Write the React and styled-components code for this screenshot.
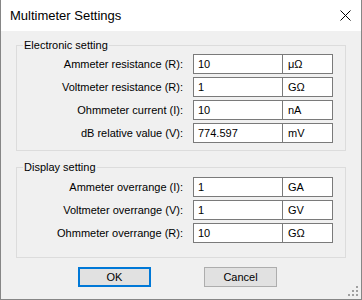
import React from "react";
import styled, { createGlobalStyle } from "styled-components";

const Global = createGlobalStyle`
  body{
    margin:0;
    background:#f0f0f0;
    font-family:"Liberation Sans", Arial, sans-serif;
  }
`

const Window = styled.div`
  position:relative;
  width:362px;
  height:300px;
  box-sizing:border-box;
  border:1px solid #868686;
  border-top:none;
  background:#f0f0f0;
  display:flex;
  flex-direction:column;
`

const TitleBar = styled.div`
  height:31px;
  background:#fff;
  display:flex;
  align-items:center;
  justify-content:space-between;
  padding:0 10px 0 9px;
  font-size:13px;
  color:#000;
`

const Body = styled.div`
  padding:8px 15px 0 15px;
  display:flex;
  flex-direction:column;
`

const Group = styled.fieldset`
  margin:0 0 ${p => p.gapBelow}px 0;
  padding:${p => p.padTop}px 0 ${p => p.padBottom}px 0;
  width:330px;
  box-sizing:border-box;
  border:1px solid #dcdcdc;
  display:flex;
  flex-direction:column;
  gap:3px;
  min-inline-size:0;
`

const Legend = styled.legend`
  margin-left:6px;
  padding:0 1px;
  font-size:11px;
  line-height:13px;
  color:#000;
`

const Row = styled.div`
  display:flex;
  align-items:center;
  height:20px;
`

const Label = styled.span`
  width:166px;
  text-align:right;
  font-size:11px;
  color:#000;
  margin-right:10px;
  white-space:nowrap;
`

const Field = styled.div`
  box-sizing:border-box;
  height:20px;
  width:${p => p.w}px;
  border:1px solid #7a7a7a;
  background:#fff;
  font-size:11px;
  line-height:18px;
  padding-left:${p => p.pad}px;
  color:#000;
  margin-left:${p => p.overlap ? -1 : 0}px;
`

const Buttons = styled.div`
  display:flex;
  gap:53px;
  padding-left:62px;
`

const Button = styled.div`
  box-sizing:border-box;
  width:73px;
  height:20px;
  background:#e1e1e1;
  border:${p => p.primary ? "2px solid #0078d7" : "1px solid #adadad"};
  display:flex;
  align-items:center;
  justify-content:center;
  font-size:11px;
  color:#000;
`

const Grip = styled.svg`
  position:absolute;
  right:1px;
  bottom:1px;
`

const rows1 = [
  ["Ammeter resistance (R):", "10", "μΩ"],
  ["Voltmeter resistance (R):", "1", "GΩ"],
  ["Ohmmeter current (I):", "10", "nA"],
  ["dB relative value (V):", "774.597", "mV"],
]

const rows2 = [
  ["Ammeter overrange (I):", "1", "GA"],
  ["Voltmeter overrange (V):", "1", "GV"],
  ["Ohmmeter overrange (R):", "10", "GΩ"],
]

const SettingRow = ({ label, value, unit }) => (
  <Row>
    <Label>{label}</Label>
    <Field w={90} pad={4}>{value}</Field>
    <Field w={51} pad={5} overlap>{unit}</Field>
  </Row>
)

const App = () => {
  return (
    <>
      <Global />
      <Window>
        <TitleBar>
          <span>Multimeter Settings</span>
          <svg width="11" height="11" viewBox="0 0 11 11">
            <path d="M0.5 0.5L10.5 10.5M10.5 0.5L0.5 10.5" stroke="#000" strokeWidth="1" />
          </svg>
        </TitleBar>
        <Body>
          <Group padTop={2} padBottom={7} gapBelow={10}>
            <Legend>Electronic setting</Legend>
            {rows1.map((r, i) => (
              <SettingRow key={i} label={r[0]} value={r[1]} unit={r[2]} />
            ))}
          </Group>
          <Group padTop={3} padBottom={14} gapBelow={9}>
            <Legend>Display setting</Legend>
            {rows2.map((r, i) => (
              <SettingRow key={i} label={r[0]} value={r[1]} unit={r[2]} />
            ))}
          </Group>
          <Buttons>
            <Button primary>OK</Button>
            <Button>Cancel</Button>
          </Buttons>
        </Body>
        <Grip width="12" height="12" viewBox="0 0 12 12">
          <g fill="#a0a0a0">
            <rect x="8" y="0" width="2" height="2" />
            <rect x="4" y="4" width="2" height="2" />
            <rect x="8" y="4" width="2" height="2" />
            <rect x="0" y="8" width="2" height="2" />
            <rect x="4" y="8" width="2" height="2" />
            <rect x="8" y="8" width="2" height="2" />
          </g>
        </Grip>
      </Window>
    </>
  );
}

export default App;
